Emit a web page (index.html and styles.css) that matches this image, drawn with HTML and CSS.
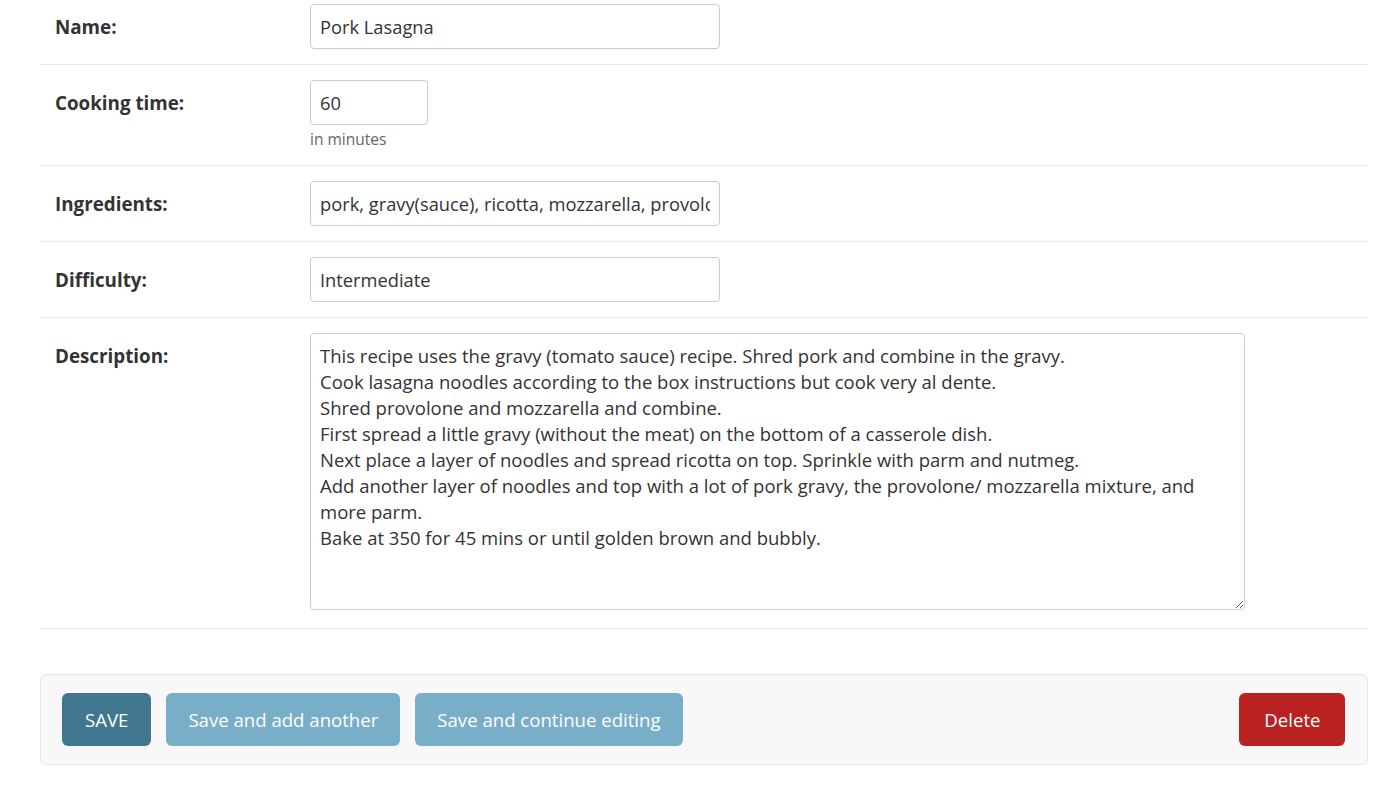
FILE: index.html
```html
<!DOCTYPE html>
<html lang="en">
<head>
<meta charset="utf-8">
<title>Change recipe</title>
<link rel="stylesheet" href="styles.css">
</head>
<body>
<main class="content">
  <form class="change-form">
    <fieldset class="module">
      <div class="form-row first">
        <label class="field-label" for="id_name">Name:</label>
        <div class="field-box">
          <input class="text-input wide" id="id_name" type="text" value="Pork Lasagna">
        </div>
      </div>
      <div class="form-row">
        <label class="field-label" for="id_cooking_time">Cooking time:</label>
        <div class="field-box">
          <input class="text-input narrow" id="id_cooking_time" type="text" value="60">
          <div class="help">in minutes</div>
        </div>
      </div>
      <div class="form-row">
        <label class="field-label" for="id_ingredients">Ingredients:</label>
        <div class="field-box">
          <input class="text-input wide" id="id_ingredients" type="text" value="pork, gravy(sauce), ricotta, mozzarella, provolone, parm, nutmeg">
        </div>
      </div>
      <div class="form-row">
        <label class="field-label" for="id_difficulty">Difficulty:</label>
        <div class="field-box">
          <input class="text-input wide" id="id_difficulty" type="text" value="Intermediate">
        </div>
      </div>
      <div class="form-row last">
        <label class="field-label" for="id_description">Description:</label>
        <div class="field-box">
          <textarea class="text-area" id="id_description">This recipe uses the gravy (tomato sauce) recipe. Shred pork and combine in the gravy.
Cook lasagna noodles according to the box instructions but cook very al dente.
Shred provolone and mozzarella and combine.
First spread a little gravy (without the meat) on the bottom of a casserole dish.
Next place a layer of noodles and spread ricotta on top. Sprinkle with parm and nutmeg.
Add another layer of noodles and top with a lot of pork gravy, the provolone/ mozzarella mixture, and more parm.
Bake at 350 for 45 mins or until golden brown and bubbly.</textarea>
        </div>
      </div>
    </fieldset>
    <div class="submit-row">
      <button type="button" class="btn btn-default">SAVE</button>
      <button type="button" class="btn">Save and add another</button>
      <button type="button" class="btn">Save and continue editing</button>
      <a class="btn btn-delete" href="#">Delete</a>
    </div>
  </form>
</main>
</body>
</html>
```

FILE: styles.css
```css
html, body {
  margin: 0;
  padding: 0;
  background: #fff;
}

body {
  font-family: "Open Sans", "Noto Sans", "Liberation Sans", sans-serif;
  color: #333;
  font-size: 18px;
}

.content {
  padding: 0 16px 0 40px;
}

.change-form {
  margin: 0;
}

.module {
  border: 0;
  margin: 0;
  padding: 0;
  min-width: 0;
}

.form-row {
  display: flex;
  align-items: flex-start;
  padding: 15px 15px;
  border-bottom: 1px solid #e8e8e8;
}

.form-row.first {
  padding-top: 4px;
}

.form-row.last {
  padding-bottom: 18px;
}

.field-label {
  flex: 0 0 255px;
  font-weight: 700;
  font-size: 18.8px;
  line-height: 26px;
  padding-top: 10px;
  color: #333;
}

.field-box {
  display: flex;
  flex-direction: column;
  align-items: flex-start;
}

.text-input {
  box-sizing: border-box;
  height: 45px;
  padding: 8px 9px;
  border: 1px solid #ccc;
  border-radius: 4px;
  font-family: inherit;
  font-size: 18.3px;
  line-height: 26px;
  color: #333;
  background: #fff;
  margin: 0;
}

.text-input.wide {
  width: 410px;
}

.text-input.narrow {
  width: 118px;
}

.help {
  margin-top: 3px;
  font-size: 15.5px;
  line-height: 22px;
  color: #666;
}

.text-area {
  display: block;
  box-sizing: border-box;
  width: 935px;
  height: 277px;
  padding: 9px 9px;
  border: 1px solid #ccc;
  border-radius: 4px;
  font-family: inherit;
  font-size: 18.5px;
  line-height: 26px;
  color: #333;
  background: #fff;
  margin: 0;
  resize: both;
}

.submit-row {
  display: flex;
  gap: 15px;
  align-items: center;
  margin-top: 45px;
  padding: 18px 22px 18px 21px;
  background: #f8f8f8;
  border: 1px solid #e8e8e8;
  border-radius: 6px;
}

.btn {
  box-sizing: border-box;
  height: 53px;
  padding: 0 22px;
  border: 0;
  border-radius: 6px;
  background: #79aec8;
  color: #fff;
  font-family: inherit;
  font-size: 18.6px;
  line-height: 53px;
  text-decoration: none;
  cursor: pointer;
  display: inline-block;
}

.btn-default {
  background: #417690;
  padding: 0 23px;
}

.btn-delete {
  margin-left: auto;
  background: #ba2121;
  padding: 0 24.5px 0 25px;
}
```
